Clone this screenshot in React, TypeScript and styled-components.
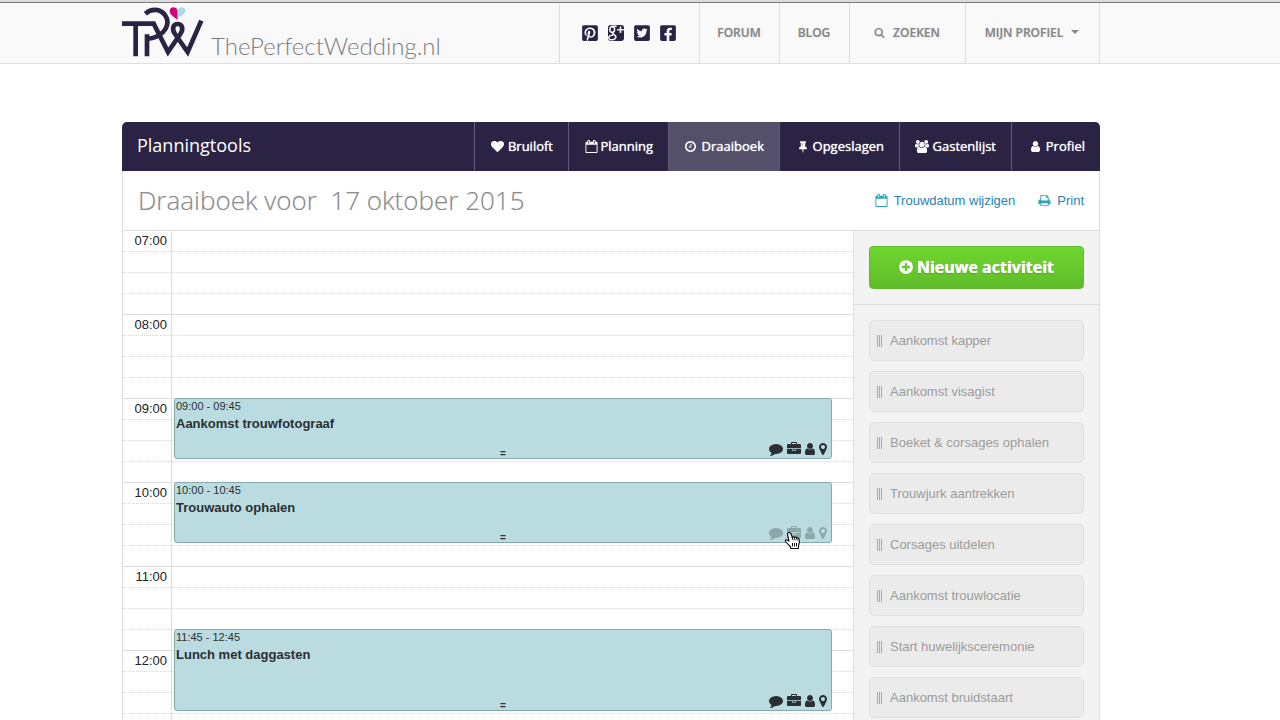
import React from "react";
import styled, { createGlobalStyle, css } from "styled-components";
import { FaPinterestSquare, FaTwitterSquare, FaFacebookSquare } from "react-icons/fa";

const GlobalStyle = createGlobalStyle`
  * { box-sizing: border-box; }
  body {
    margin: 0;
    background: #fff;
    color: #222;
    font-family: "Liberation Sans", Arial, sans-serif;
    font-size: 13px;
  }
  h1, h2, p, ul, ol { margin: 0; padding: 0; font-weight: inherit; }
  ul, ol { list-style: none; }
  a { color: inherit; text-decoration: none; }
  button { font: inherit; cursor: pointer; }
`;

const openSans = css`font-family: "Open Sans", "Noto Sans", sans-serif;`;

/* ---------- icons ---------- */

const paths = {
  heart:
    "M896 1664q-26 0-44-18l-624-602q-10-8-27.5-26t-55.5-65.5-68-97.5-53.5-121-23.5-138q0-220 127-344t351-124q62 0 126.5 21.5t120 58 95.5 68.5 76 68q36-36 76-68t95.5-68.5 120-58 126.5-21.5q224 0 351 124t127 344q0 221-229 450l-623 600q-18 18-44 18z",
  user:
    "M1536 1399q0 109-62.5 187t-150.5 78h-854q-88 0-150.5-78t-62.5-187q0-85 8.5-160.5t31.5-152 58.5-131 94-89 134.5-34.5q131 128 313 128t313-128q76 0 134.5 34.5t94 89 58.5 131 31.5 152 8.5 160.5zm-256-887q0 159-112.5 271.5t-271.5 112.5-271.5-112.5-112.5-271.5 112.5-271.5 271.5-112.5 271.5 112.5 112.5 271.5z",
  users:
    "M529 896q-162 5-265 128h-134q-82 0-138-40.5t-56-118.5q0-353 124-353 6 0 43.5 21t97.5 42.5 119 21.5q67 0 133-23-5 37-5 66 0 139 81 256zm1071 637q0 120-73 189.5t-194 69.5h-874q-121 0-194-69.5t-73-189.5q0-53 3.5-103.5t14-109 26.5-108.5 43-97.5 62-81 85.5-53.5 111.5-20q10 0 43 21.5t73 48 107 48 135 21.5 135-21.5 107-48 73-48 43-21.5q61 0 111.5 20t85.5 53.5 62 81 43 97.5 26.5 108.5 14 109 3.5 103.5zm-1024-1277q0 106-75 181t-181 75-181-75-75-181 75-181 181-75 181 75 75 181zm704 384q0 159-112.5 271.5t-271.5 112.5-271.5-112.5-112.5-271.5 112.5-271.5 271.5-112.5 271.5 112.5 112.5 271.5zm576 225q0 78-56 118.5t-138 40.5h-134q-103-123-265-128 81-117 81-256 0-29-5-66 66 23 133 23 59 0 119-21.5t97.5-42.5 43.5-21q124 0 124 353zm-128-609q0 106-75 181t-181 75-181-75-75-181 75-181 181-75 181 75 75 181z",
  marker:
    "M1152 640q0-106-75-181t-181-75-181 75-75 181 75 181 181 75 181-75 75-181zm256 0q0 109-33 179l-364 774q-16 33-47.5 52t-67.5 19-67.5-19-46.5-52l-365-774q-33-70-33-179 0-212 150-362t362-150 362 150 150 362z",
  briefcase:
    "M640 256h512v-128h-512v128zm1152 640v480q0 66-47 113t-113 47h-1472q-66 0-113-47t-47-113v-480h672v160q0 26 19 45t45 19h320q26 0 45-19t19-45v-160h672zm-768 0v128h-256v-128h256zm768-480v384h-1792v-384q0-66 47-113t113-47h352v-160q0-40 28-68t68-28h576q40 0 68 28t28 68v160h352q66 0 113 47t47 113z",
  comment:
    "M1792 896q0 174-120 321.5t-326 233-450 85.5q-70 0-145-8-198 175-460 242-49 14-114 22-17 2-30.5-9t-17.5-29v-1q-3-4-.5-12t2-10 4.5-9.5l6-9 7-8.5 8-9q7-8 31-34.5t34.5-38 31-39.5 32.5-51 27-59 26-76q-157-89-247.5-220t-90.5-281q0-130 71-248.5t191-204.5 286-136.5 348-50.5q244 0 450 85.5t326 233 120 321.5z",
  pin:
    "M800 864v-448q0-14-9-23t-23-9-23 9-9 23v448q0 14 9 23t23 9 23-9 9-23zm672 352q0 26-19 45t-45 19h-429l-51 483q-2 12-10.5 20.5t-20.5 8.5h-1q-27 0-32-27l-76-485h-404q-26 0-45-19t-19-45q0-123 78.5-221.5t177.5-98.5v-512q-52 0-90-38t-38-90 38-90 90-38h640q52 0 90 38t38 90-38 90-90 38v512q99 0 177.5 98.5t78.5 221.5z",
  clock:
    "M1024 544v448q0 14-9 23t-23 9h-320q-14 0-23-9t-9-23v-64q0-14 9-23t23-9h224v-352q0-14 9-23t23-9h64q14 0 23 9t9 23zm416 352q0-148-73-273t-198-198-273-73-273 73-198 198-73 273 73 273 198 198 273 73 273-73 198-198 73-273zm224 0q0 209-103 385.5t-279.5 279.5-385.5 103-385.5-103-279.5-279.5-103-385.5 103-385.5 279.5-279.5 385.5-103 385.5 103 279.5 279.5 103 385.5z",
  plus:
    "M1344 960v-128q0-26-19-45t-45-19h-256v-256q0-26-19-45t-45-19h-128q-26 0-45 19t-19 45v256h-256q-26 0-45 19t-19 45v128q0 26 19 45t45 19h256v256q0 26 19 45t45 19h128q26 0 45-19t19-45v-256h256q26 0 45-19t19-45zm320-64q0 209-103 385.5t-279.5 279.5-385.5 103-385.5-103-279.5-279.5-103-385.5 103-385.5 279.5-279.5 385.5-103 385.5 103 279.5 279.5 103 385.5z",
  search:
    "M1216 832q0-185-131.5-316.5t-316.5-131.5-316.5 131.5-131.5 316.5 131.5 316.5 316.5 131.5 316.5-131.5 131.5-316.5zm512 832q0 52-38 90t-90 38q-54 0-90-38l-343-342q-179 124-399 124-143 0-273.5-55.5t-225-150-150-225-55.5-273.5 55.5-273.5 150-225 225-150 273.5-55.5 273.5 55.5 225 150 150 225 55.5 273.5q0 220-124 399l343 343q37 37 37 90z",
  print:
    "M448 1536h896v-256h-896v256zm0-640h896v-384h-160q-40 0-68-28t-28-68v-160h-640v640zm1152 64q0-26-19-45t-45-19-45 19-19 45 19 45 45 19 45-19 19-45zm128 0v416q0 13-9.5 22.5t-22.5 9.5h-224v160q0 40-28 68t-68 28h-960q-40 0-68-28t-28-68v-160h-224q-13 0-22.5-9.5t-9.5-22.5v-416q0-79 56.5-135.5t135.5-56.5h64v-544q0-40 28-68t68-28h672q40 0 88 20t76 48l152 152q28 28 48 76t20 88v256h64q79 0 135.5 56.5t56.5 135.5z",
  calendar:
    "M192 1664h1408v-1024h-1408v1024zm384-1216v-288q0-32-32-32h-64q-32 0-32 32v288q0 32 32 32h64q32 0 32-32zm768 0v-288q0-32-32-32h-64q-32 0-32 32v288q0 32 32 32h64q32 0 32-32zm384-64v1280q0 128-128 128h-1408q-128 0-128-128v-1280q0-128 128-128h128v-96q0-160 160-160h64q160 0 160 160v96h384v-96q0-160 160-160h64q160 0 160 160v96h128q128 0 128 128z",
};

type IconName = keyof typeof paths;

const Glyph = styled.svg`
  display: block;
  flex: none;
  fill: currentColor;
`;

/* [x, width] of the part of the 1792-unit box that each glyph fills */
const spans: Partial<Record<IconName, [number, number]>> = {
  user: [256, 1280],
  users: [-64, 1920],
  marker: [384, 1024],
  pin: [320, 1152],
  clock: [128, 1536],
  plus: [128, 1536],
};

function Icon({ name, size = 14 }: { name: IconName; size?: number }) {
  const [x, w] = spans[name] ?? [0, 1792];
  return (
    <Glyph
      viewBox={`${x} 0 ${w} 1792`}
      width={Math.round((size * w) / 1792)}
      height={size}
      aria-hidden="true"
    >
      <path fillRule="evenodd" d={paths[name]} />
    </Glyph>
  );
}

function GooglePlusIcon() {
  return (
    <Glyph width="16" height="16" viewBox="0 0 16 16" aria-hidden="true">
      <rect width="16" height="16" rx="3" fill="#2a2344" />
      <g fill="none" stroke="#f9f9f9" strokeWidth="1.5">
        <ellipse cx="4.2" cy="4.6" rx="2.4" ry="2.8" />
        <path d="M3.5 1.2H8.6M5.4 7.4Q4 8.6 6 9.6Q8.6 11 7.6 13Q6.5 15.2 3 14.8Q.4 14.3 .8 12.2Q1.4 10 5.2 10.2" />
        <path d="M12.5 1.5V8M9.3 4.7H15.7" />
      </g>
    </Glyph>
  );
}

function Logo() {
  return (
    <svg width="82" height="51" viewBox="36 15 246 153" aria-hidden="true">
      <g fill="none" stroke="#2a2344" strokeWidth="14">
        <path d="M36 68H131L174 153L211 99C222 83 216 69 203 69C190 69 184 83 195 99L233 153L274 59" />
        <path d="M77 68V166M111 100V166" />
        <path d="M106 38C124 22 150 22 165 42C182 66 169 107 111 114" />
      </g>
      <path d="M203 56C192 48 179 41 179 29C181 16 198 16 203 28Z" fill="#d6007f" />
      <path d="M203 50C214 46 226 39 226 28C223 16 208 16 203 28Z" fill="#a8dbe2" />
    </svg>
  );
}

/* ---------- site header ---------- */

const TopStrip = styled.div`
  height: 3px;
  background: #dcdcdc;
  border-bottom: 1px solid #7c7c7c;
`;

const SiteHeader = styled.header`
  background: #f9f9f9;
  border-bottom: 1px solid #dedede;
  padding: 0 180px 0 122px;
`;

const HeaderInner = styled.div`
  display: flex;
  justify-content: space-between;
  max-width: 978px;
  height: 60px;
`;

const Brand = styled.a`
  display: flex;
  padding-top: 3px;
  gap: 7px;
`;

const BrandName = styled.span`
  font-family: Lato, sans-serif;
  font-weight: 300;
  font-size: 24px;
  line-height: 30px;
  padding-top: 25px;
  color: #7c7c80;
`;

const HeaderNav = styled.nav`
  display: flex;
  border-right: 1px solid #dedede;
`;

const HeaderCell = styled.div<{ $width: number }>`
  display: flex;
  align-items: center;
  justify-content: center;
  gap: 8px;
  width: ${(p) => p.$width}px;
  padding-right: 1px;
  border-left: 1px solid #dedede;
`;

const HeaderLink = styled.a<{ $gap?: number }>`
  display: flex;
  align-items: center;
  gap: ${(p) => p.$gap ?? 8}px;
  padding-bottom: 2px;
  color: #88888c;
  ${openSans}
  font-size: 12px;
  font-weight: 600;
  text-shadow: 0 0 1px rgba(136, 136, 140, 0.6);
`;

const SocialLink = styled.a`
  display: flex;
  justify-content: center;
  width: 18px;
  color: #2a2344;
  font-size: 18px;
`;

const Caret = styled.span`
  border: 4px solid transparent;
  border-top-color: currentColor;
  border-bottom: 0;
`;

/* ---------- planning panel ---------- */

const Page = styled.main`
  padding: 58px 180px 0 122px;
`;

const Panel = styled.section`
  max-width: 978px;
`;

const ToolBar = styled.div`
  display: flex;
  align-items: stretch;
  justify-content: space-between;
  height: 49px;
  background: #2a2344;
  color: #fff;
  border-radius: 5px 5px 0 0;
  overflow: hidden;
  ${openSans}
`;

const ToolTitle = styled.h1`
  padding-left: 15px;
  font-size: 18px;
  line-height: 47px;
`;

const Tabs = styled.nav`
  display: flex;
`;

const Tab = styled.a<{ $width: number; $active?: boolean; $gap: number }>`
  display: flex;
  align-items: center;
  justify-content: flex-end;
  gap: ${(p) => p.$gap}px;
  width: ${(p) => p.$width}px;
  padding: 0 15px 1px 0;
  border-left: 1px solid #625d76;
  background: ${(p) => (p.$active ? "#55506a" : "transparent")};
  font-size: 13px;
  font-weight: 500;
  text-shadow: 0 0 1px #fff;
`;

const PanelBody = styled.div`
  border: 1px solid #dedede;
  border-width: 0 1px;
`;

const Heading = styled.div`
  display: flex;
  align-items: center;
  justify-content: space-between;
  height: 60px;
  padding: 0 15px;
  border-bottom: 1px solid #dedede;
`;

const DateTitle = styled.h2`
  ${openSans}
  padding-bottom: 2px;
  font-size: 26px;
  font-weight: 300;
  color: #8c8c8c;
  text-shadow: 0 0 1px rgba(140, 140, 140, 0.4);
  white-space: pre;
`;

const Actions = styled.div`
  display: flex;
  gap: 23px;
`;

const ActionLink = styled.a`
  display: flex;
  align-items: center;
  gap: 6px;
  color: #2a82b4;

  svg { color: #2ba3b8; }
`;

const Columns = styled.div`
  display: grid;
  grid-template-columns: minmax(0, 1fr) 246px;
`;

/* ---------- schedule ---------- */

const SLOT = 21;

const Schedule = styled.div`
  position: relative;
`;

const HourRow = styled.div`
  display: grid;
  grid-template-columns: 49px 1fr;
`;

const HourLabel = styled.div`
  border-right: 1px solid #dedede;
`;

const Quarter = styled.div<{ $last?: boolean }>`
  height: ${SLOT}px;
  border-bottom: 1px ${(p) => (p.$last ? "solid #dcdcdc" : "dotted #dadada")};
  padding-right: 4px;
  text-align: right;
  line-height: 19px;
`;

const EventList = styled.ol`
  position: absolute;
  inset: 0 21px 0 51px;
`;

const EventCard = styled.li<{ $start: number; $length: number }>`
  position: absolute;
  left: 0;
  right: 0;
  top: ${(p) => p.$start * SLOT - 1}px;
  height: ${(p) => p.$length * SLOT - 2}px;
  display: flex;
  flex-direction: column;
  padding: 1px;
  background: #badce0;
  border: 1px solid #85a9ad;
  border-radius: 3px;
  color: #2b2f33;
`;

const EventTime = styled.time`
  font-size: 11px;
  line-height: 13px;
`;

const EventTitle = styled.p`
  font-size: 13px;
  font-weight: 700;
  line-height: 21px;
`;

const ResizeGrip = styled.span`
  position: absolute;
  left: 0;
  right: 0;
  bottom: 0;
  text-align: center;
  font-size: 10px;
  font-weight: 700;
  line-height: 9px;
`;

const EventIcons = styled.div<{ $faded?: boolean }>`
  position: absolute;
  right: 4px;
  bottom: 2px;
  display: flex;
  gap: 4px;
  opacity: ${(p) => (p.$faded ? 0.3 : 1)};
`;

const Pointer = styled.svg`
  position: absolute;
  right: 30px;
  bottom: -8px;
`;

/* ---------- sidebar ---------- */

const Sidebar = styled.aside`
  background: #f3f3f3;
  border-left: 1px solid #dedede;
`;

const NewBox = styled.div`
  padding: 15px;
  border-bottom: 1px solid #dedede;
`;

const NewButton = styled.button`
  display: flex;
  align-items: center;
  justify-content: center;
  gap: 4px;
  width: 100%;
  height: 43px;
  border: 1px solid #64b92c;
  border-radius: 4px;
  background: linear-gradient(#6fd72f, #60bb2b);
  color: #fff;
  text-shadow: 0 0 1px #fff, 0 1px 1px rgba(0, 0, 0, 0.25);

  && {
    ${openSans}
    padding: 0 0 2px;
    font-size: 16px;
    font-weight: 700;
  }
`;

const Suggestions = styled.ul`
  display: grid;
  gap: 10px;
  padding: 15px;
`;

const Suggestion = styled.li`
  display: flex;
  align-items: center;
  gap: 8px;
  height: 41px;
  padding-left: 7px;
  background: #ebebeb;
  border: 1px solid #e0e0e0;
  border-radius: 5px;
  color: #9b9b9b;
`;

const DragHandle = styled.span`
  width: 5px;
  height: 12px;
  border: 1px solid #a8a8a8;
  border-width: 0 1px;
  background: linear-gradient(90deg, transparent 1px, #a8a8a8 1px, #a8a8a8 2px, transparent 2px);
`;

/* ---------- data ---------- */

const tabs: { label: string; icon: IconName; width: number; gap: number; active?: boolean }[] = [
  { label: "Bruiloft", icon: "heart", width: 94, gap: 4 },
  { label: "Planning", icon: "calendar", width: 100, gap: 2 },
  { label: "Draaiboek", icon: "clock", width: 111, gap: 6, active: true },
  { label: "Opgeslagen", icon: "pin", width: 120, gap: 6 },
  { label: "Gastenlijst", icon: "users", width: 112, gap: 4 },
  { label: "Profiel", icon: "user", width: 89, gap: 6 },
];

const hours = ["07:00", "08:00", "09:00", "10:00", "11:00", "12:00"];

const events = [
  { time: "09:00 - 09:45", title: "Aankomst trouwfotograaf", start: 8, length: 3 },
  { time: "10:00 - 10:45", title: "Trouwauto ophalen", start: 12, length: 3, hovered: true },
  { time: "11:45 - 12:45", title: "Lunch met daggasten", start: 19, length: 4 },
];

const suggestions = [
  "Aankomst kapper",
  "Aankomst visagist",
  "Boeket & corsages ophalen",
  "Trouwjurk aantrekken",
  "Corsages uitdelen",
  "Aankomst trouwlocatie",
  "Start huwelijksceremonie",
  "Aankomst bruidstaart",
];

export default function App() {
  return (
    <>
      <GlobalStyle />
      <TopStrip />
      <SiteHeader>
        <HeaderInner>
          <Brand href="#" aria-label="ThePerfectWedding.nl">
            <Logo />
            <BrandName>ThePerfectWedding.nl</BrandName>
          </Brand>
          <HeaderNav>
            <HeaderCell $width={140}>
              <SocialLink href="#" aria-label="Pinterest"><FaPinterestSquare /></SocialLink>
              <SocialLink href="#" aria-label="Google Plus"><GooglePlusIcon /></SocialLink>
              <SocialLink href="#" aria-label="Twitter"><FaTwitterSquare /></SocialLink>
              <SocialLink href="#" aria-label="Facebook"><FaFacebookSquare /></SocialLink>
            </HeaderCell>
            <HeaderCell $width={80}><HeaderLink href="#">FORUM</HeaderLink></HeaderCell>
            <HeaderCell $width={70}><HeaderLink href="#">BLOG</HeaderLink></HeaderCell>
            <HeaderCell $width={116}>
              <HeaderLink href="#"><Icon name="search" size={11} />ZOEKEN</HeaderLink>
            </HeaderCell>
            <HeaderCell $width={134}>
              <HeaderLink href="#">MIJN PROFIEL<Caret /></HeaderLink>
            </HeaderCell>
          </HeaderNav>
        </HeaderInner>
      </SiteHeader>

      <Page>
        <Panel>
          <ToolBar>
            <ToolTitle>Planningtools</ToolTitle>
            <Tabs>
              {tabs.map((tab) => (
                <Tab key={tab.label} href="#" $width={tab.width} $gap={tab.gap} $active={tab.active}>
                  <Icon name={tab.icon} size={13} />
                  {tab.label}
                </Tab>
              ))}
            </Tabs>
          </ToolBar>
          <PanelBody>
            <Heading>
              <DateTitle>{"Draaiboek voor  17 oktober 2015"}</DateTitle>
              <Actions>
                <ActionLink href="#"><Icon name="calendar" size={13} />Trouwdatum wijzigen</ActionLink>
                <ActionLink href="#"><Icon name="print" size={13} />Print</ActionLink>
              </Actions>
            </Heading>
            <Columns>
              <Schedule>
                {hours.map((hour) => (
                  <HourRow key={hour}>
                    <HourLabel>
                      <Quarter>{hour}</Quarter>
                      <Quarter />
                      <Quarter />
                      <Quarter $last />
                    </HourLabel>
                    <div>
                      <Quarter />
                      <Quarter />
                      <Quarter />
                      <Quarter $last />
                    </div>
                  </HourRow>
                ))}
                <EventList>
                  {events.map((event) => (
                    <EventCard key={event.title} $start={event.start} $length={event.length}>
                      <EventTime>{event.time}</EventTime>
                      <EventTitle>{event.title}</EventTitle>
                      <ResizeGrip>=</ResizeGrip>
                      <EventIcons $faded={event.hovered}>
                        <Icon name="comment" />
                        <Icon name="briefcase" />
                        <Icon name="user" />
                        <Icon name="marker" />
                      </EventIcons>
                      {event.hovered && (
                        <Pointer width="17" height="19" viewBox="0 0 17 19" aria-hidden="true">
                          <path
                            d="M4.5 1.5Q6 .8 6.8 2.5L8.3 6.5Q9.5 5.3 10.6 6.5Q12 5.6 13 7Q14.6 6.6 15.2 8.5Q15.8 11 14.8 13.5L14.3 17.5H6.8L6.3 15.5Q3.5 13 1.5 10.5Q.8 9 2.3 8.8Q3.6 8.8 5 10.4L3.5 3.5Q3.3 2 4.5 1.5Z"
                            fill="#fff"
                            stroke="#111"
                            strokeWidth="1.2"
                          />
                          <path d="M8.3 6.5L9 9.3M10.6 6.5L11 9.3M13 7L13 9.5M8.5 12V15.5M10.5 12V15.5M12.5 12V15.5" stroke="#111" fill="none" />
                        </Pointer>
                      )}
                    </EventCard>
                  ))}
                </EventList>
              </Schedule>
              <Sidebar>
                <NewBox>
                  <NewButton type="button"><Icon name="plus" size={16} />Nieuwe activiteit</NewButton>
                </NewBox>
                <Suggestions>
                  {suggestions.map((text) => (
                    <Suggestion key={text}><DragHandle />{text}</Suggestion>
                  ))}
                </Suggestions>
              </Sidebar>
            </Columns>
          </PanelBody>
        </Panel>
      </Page>
    </>
  );
}
